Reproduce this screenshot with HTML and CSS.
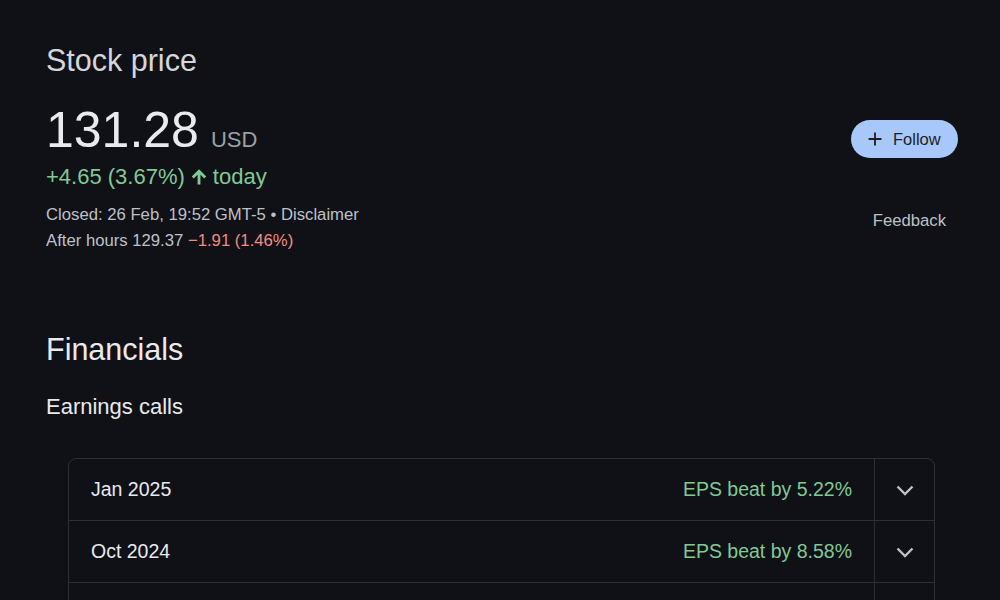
FILE: index.html
```html
<!DOCTYPE html>
<html lang="en">
<head>
<meta charset="utf-8">
<title>Stock price</title>
<link rel="stylesheet" href="styles.css">
</head>
<body>
<main class="page">
  <section class="quote">
    <div class="quote-main">
      <h1 class="title">Stock price</h1>
      <div class="price-row">
        <span class="price">131.28</span>
        <span class="currency">USD</span>
      </div>
      <div class="change"><span>+4.65 (3.67%)</span>
        <svg class="arrow" viewBox="0 0 24 24" width="20" height="20" aria-hidden="true"><path d="M12 21V5M4.5 12.5L12 5l7.5 7.5" fill="none" stroke="currentColor" stroke-width="3.4"/></svg>
        <span>today</span></div>
      <div class="meta">Closed: 26 Feb, 19:52 GMT-5 • Disclaimer</div>
      <div class="meta">After hours 129.37 <span class="neg">−1.91 (1.46%)</span></div>
    </div>
    <div class="quote-side">
      <button class="follow">
        <svg viewBox="0 0 24 24" width="22" height="22" aria-hidden="true"><path d="M19 13h-6v6h-2v-6H5v-2h6V5h2v6h6v2z" fill="currentColor"/></svg>
        <span>Follow</span>
      </button>
      <div class="feedback">Feedback</div>
    </div>
  </section>

  <section class="financials">
    <h2 class="fin-title">Financials</h2>
    <h3 class="sub-title">Earnings calls</h3>
    <div class="card">
      <div class="row">
        <div class="row-main"><span class="date">Jan 2025</span><span class="eps">EPS beat by 5.22%</span></div>
        <div class="row-toggle"><svg viewBox="0 0 24 24" width="24" height="24" aria-hidden="true"><path d="M4.5 8.5l7.5 7.5 7.5-7.5" fill="none" stroke="currentColor" stroke-width="2.4"/></svg></div>
      </div>
      <div class="row">
        <div class="row-main"><span class="date">Oct 2024</span><span class="eps">EPS beat by 8.58%</span></div>
        <div class="row-toggle"><svg viewBox="0 0 24 24" width="24" height="24" aria-hidden="true"><path d="M4.5 8.5l7.5 7.5 7.5-7.5" fill="none" stroke="currentColor" stroke-width="2.4"/></svg></div>
      </div>
      <div class="row">
        <div class="row-main"></div>
        <div class="row-toggle"></div>
      </div>
    </div>
  </section>
</main>
</body>
</html>
```

FILE: styles.css
```css
* { box-sizing: border-box; }
html, body {
  margin: 0;
  padding: 0;
  background: #101116;
  color: #e8eaed;
  font-family: "Liberation Sans", Arial, sans-serif;
}
.page {
  padding: 42px 42px 0 46px;
}
.quote {
  display: flex;
  justify-content: space-between;
}
.quote-main {
  display: flex;
  flex-direction: column;
}
.title {
  margin: 0;
  font-size: 30.5px;
  line-height: 36px;
  font-weight: 400;
  color: #d4d6da;
}
.price-row {
  margin-top: 24px;
  display: flex;
  align-items: baseline;
  gap: 12px;
  height: 56px;
  line-height: 56px;
}
.price {
  font-size: 50px;
  color: #e8eaed;
}
.currency {
  font-size: 22px;
  line-height: 22px;
  color: #9aa0a6;
}
.change {
  margin-top: 6px;
  font-size: 22px;
  line-height: 26px;
  color: #81c995;
  display: flex;
  align-items: center;
  gap: 4px;
}
.meta {
  font-size: 16.7px;
  line-height: 26px;
  color: #bdc1c6;
}
.change + .meta { margin-top: 12px; }
.neg { color: #f28b82; }
.quote-side {
  display: flex;
  flex-direction: column;
  align-items: flex-end;
}
.follow {
  margin-top: 78px;
  height: 38px;
  width: 107px;
  border: none;
  border-radius: 19px;
  background: #a8c7fa;
  color: #1f1f1f;
  font-family: inherit;
  font-size: 16.5px;
  display: flex;
  align-items: center;
  gap: 7px;
  padding: 0 0 0 13px;
}
.feedback {
  margin-top: 53px;
  margin-right: 12px;
  font-size: 16.7px;
  line-height: 20px;
  color: #bdc1c6;
}
.financials {
  margin-top: 77px;
}
.fin-title {
  margin: 0;
  font-size: 30.5px;
  line-height: 36px;
  font-weight: 400;
  color: #e8eaed;
}
.sub-title {
  margin: 26px 0 0;
  font-size: 22px;
  line-height: 28px;
  font-weight: 400;
  color: #e8eaed;
}
.card {
  margin: 37px 23px 0 22px;
  border: 1px solid #2d2f34;
  border-radius: 8px;
}
.row {
  display: flex;
  height: 62px;
  border-top: 1px solid #2d2f34;
}
.row:first-child {
  border-top: none;
  height: 61px;
}
.row-main {
  flex: 1;
  display: flex;
  align-items: center;
  justify-content: space-between;
  padding: 0 22px 0 22px;
  font-size: 19.5px;
}
.date { color: #e8eaed; }
.eps { color: #81c995; }
.row-toggle {
  width: 60px;
  border-left: 1px solid #2d2f34;
  display: flex;
  align-items: center;
  justify-content: center;
  color: #bdc1c6;
}
```
